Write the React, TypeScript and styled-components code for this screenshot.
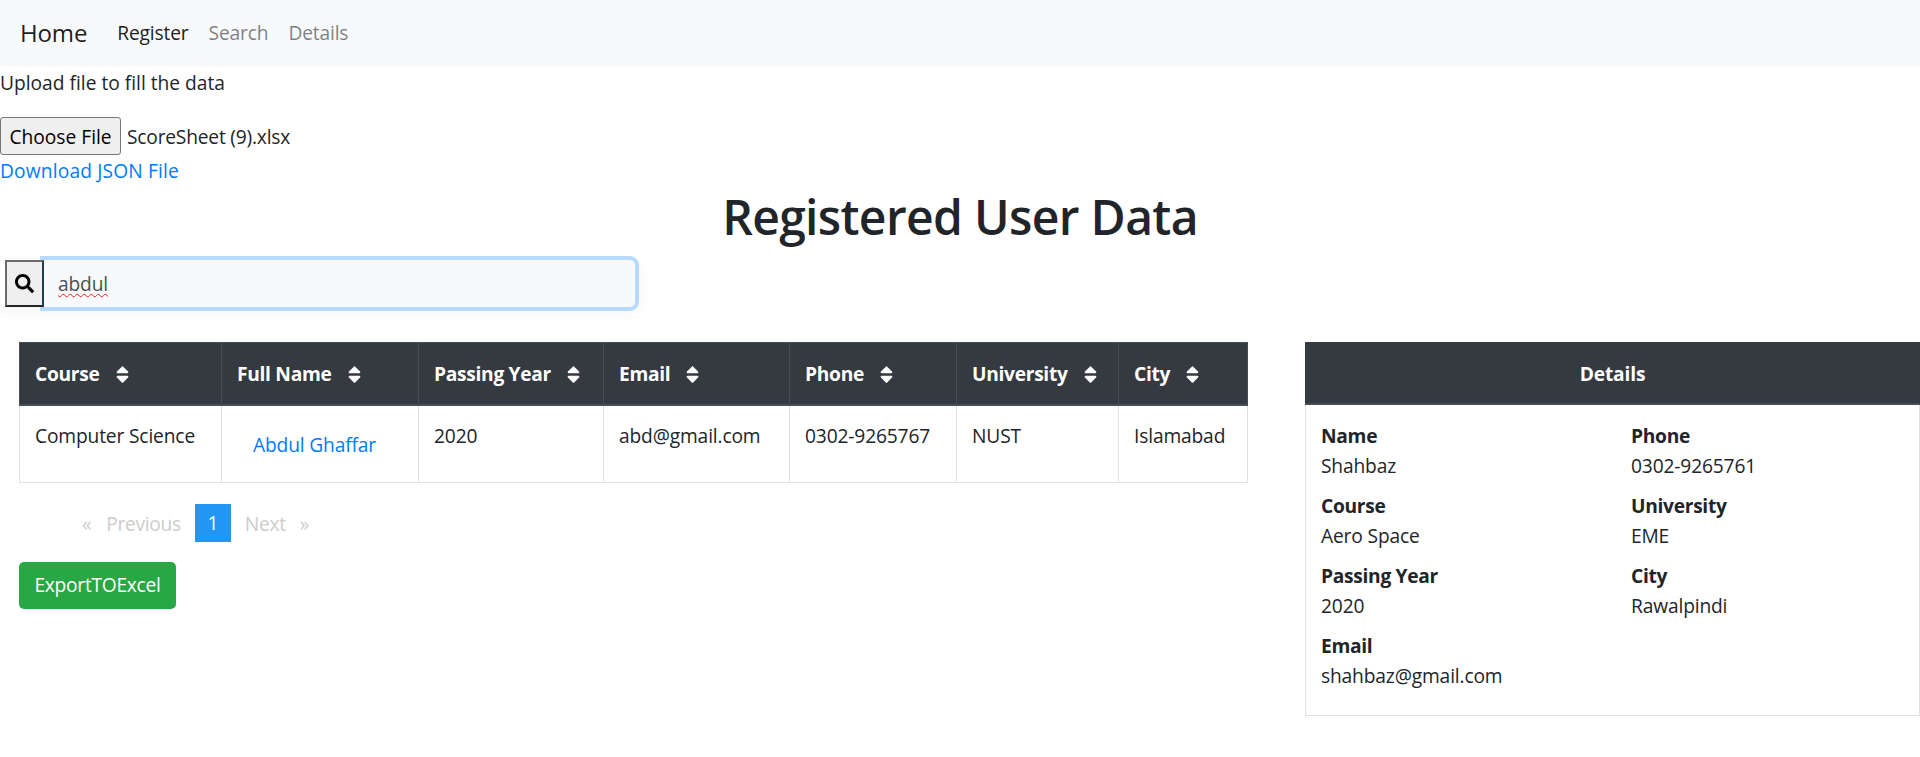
import React from "react";
import styled, { createGlobalStyle } from "styled-components";
import { FaSearch, FaSort } from "react-icons/fa";

const FONT = `"Open Sans", "Noto Sans", "Liberation Sans", sans-serif`;

const Global = createGlobalStyle`
  html, body { margin: 0; padding: 0; background: #fff; }
  body {
    font-family: ${FONT};
    font-size: 19.2px;
    line-height: 28.8px;
    color: #212529;
    letter-spacing: -0.15px;
  }
  * { box-sizing: border-box; }
`;

const Navbar = styled.nav`
  height: 67px;
  background: #f8f9fa;
  display: flex;
  align-items: center;
  padding: 0 20px;
`;
const Brand = styled.a`
  font-size: 24px;
  color: rgba(0, 0, 0, 0.9);
  margin-right: 30px;
`;
const NavLink = styled.a<{ $active?: boolean }>`
  color: ${(p) => (p.$active ? "rgba(0,0,0,0.9)" : "rgba(0,0,0,0.5)")};
  margin-right: 20px;
`;
const UploadLabel = styled.div`
  height: 50px;
  padding-top: 2px;
  letter-spacing: 0;
`;
const FileRow = styled.div`
  display: flex;
  align-items: center;
  height: 38px;
`;
const FileButton = styled.button`
  width: 121px;
  height: 38px;
  padding: 2px 0 0;
  font: inherit;
  letter-spacing: 0;
  color: #000;
  background: #efefef;
  border: 1px solid #767676;
  border-radius: 3px;
  margin-right: 6px;
`;
const FileName = styled.span`
  padding-top: 2px;
  letter-spacing: -0.2px;
`;
const Link = styled.a`
  color: #007bff;
`;
const DownloadRow = styled.div`
  height: 31px;
  padding-top: 2px;
  letter-spacing: 0.15px;
`;
const Heading = styled.h1`
  margin: 0;
  height: 60px;
  padding-top: 1px;
  font-size: 48px;
  line-height: 60px;
  font-weight: 600;
  text-align: center;
  letter-spacing: -0.65px;
`;
const SearchBar = styled.div`
  display: flex;
  width: 639px;
  height: 47px;
  margin-top: 14px;
  padding-left: 5px;
  align-items: stretch;
  border-radius: 8px;
  box-shadow: 0 4px 12px 4px rgba(0, 0, 0, 0.03);
`;
const SearchIcon = styled.div`
  position: relative;
  z-index: 1;
  width: 39px;
  display: flex;
  align-items: center;
  justify-content: center;
  background: #efefef;
  border: 2px solid;
  border-color: #6b6b6b #1d3a5c #26262a #6b6b6b;
  color: #000;
  font-size: 19px;
`;
const SearchInput = styled.div`
  width: 591px;
  display: flex;
  align-items: center;
  padding: 2px 0 0 14px;
  background: #f8f9fa;
  border-radius: 0 5px 5px 0;
  box-shadow: 0 0 0 4px #b8daff;
  color: #495057;
`;
const Misspelled = styled.span`
  text-decoration: underline wavy #e8202a;
  text-decoration-thickness: 1px;
  text-underline-offset: 2px;
`;
const Content = styled.div`
  display: flex;
  align-items: flex-start;
  margin-top: 35px;
  padding-left: 19px;
`;
const Left = styled.div`
  width: 1228px;
  flex: none;
`;
const Table = styled.table`
  width: 100%;
  table-layout: fixed;
  border-collapse: collapse;
`;
const Th = styled.th<{ $w: number }>`
  width: ${(p) => p.$w}px;
  height: 62px;
  padding: 2px 15px 0;
  background: #343a40;
  color: #fff;
  font-weight: 700;
  letter-spacing: -0.3px;
  text-align: left;
  border: 1px solid #454d55;
  border-bottom-width: 2px;
  white-space: nowrap;
`;
const SortIcon = styled(FaSort)`
  margin-left: 12px;
  font-size: 21px;
  vertical-align: -4px;
`;
const Td = styled.td`
  height: 78px;
  padding: 16px 15px 0;
  vertical-align: top;
  border: 1px solid #dee2e6;
  white-space: nowrap;
`;
const NameLink = styled(Link)`
  display: block;
  padding: 9px 0 0 16px;
`;
const Pager = styled.ul`
  list-style: none;
  display: flex;
  align-items: center;
  margin: 21px 0 0;
  padding: 0 0 0 63px;
  color: #ccc;
  letter-spacing: -0.3px;
`;
const PageText = styled.li`
  height: 38px;
  line-height: 40px;
  margin-right: 14px;
`;
const Arrow = styled(PageText)`
  margin-right: 15px;
`;
const PageNo = styled.li`
  width: 36px;
  height: 38px;
  line-height: 38px;
  text-align: center;
  background: #2196f3;
  color: #fff;
  margin-right: 14px;
`;
const ExportButton = styled.button`
  display: block;
  margin-top: 20px;
  width: 157px;
  height: 47px;
  padding: 0;
  font: inherit;
  letter-spacing: -0.28px;
  color: #fff;
  background: #28a745;
  border: 0;
  border-radius: 5px;
`;
const DetailsPanel = styled.section`
  margin-left: 58px;
  flex: 1;
  height: 374px;
  border: 1px solid #dee2e6;
  border-top: 0;
`;
const DetailsHead = styled.div`
  height: 63px;
  margin: 0 -1px;
  padding-top: 4px;
  background: #343a40;
  border-bottom: 2px solid #454d55;
  color: #fff;
  font-weight: 700;
  display: flex;
  align-items: center;
  justify-content: center;
`;
const DetailsGrid = styled.div`
  display: grid;
  grid-template-columns: 310px 1fr;
  grid-auto-rows: 70px;
  padding: 17px 0 0 15px;
`;
const Field = styled.div`
  display: flex;
  flex-direction: column;
`;
const FieldLabel = styled.strong`
  font-weight: 700;
  letter-spacing: -0.3px;
`;
const FieldValue = styled.span`
  margin-top: 1px;
`;

const cols: [string, number][] = [
  ["Course", 202],
  ["Full Name", 197],
  ["Passing Year", 185],
  ["Email", 186],
  ["Phone", 167],
  ["University", 162],
  ["City", 129],
];

const details: [string, string][] = [
  ["Name", "Shahbaz"],
  ["Phone", "0302-9265761"],
  ["Course", "Aero Space"],
  ["University", "EME"],
  ["Passing Year", "2020"],
  ["City", "Rawalpindi"],
  ["Email", "shahbaz@gmail.com"],
];

export default function App() {
  return (
    <>
      <Global />
      <Navbar>
        <Brand>Home</Brand>
        <NavLink $active>Register</NavLink>
        <NavLink>Search</NavLink>
        <NavLink>Details</NavLink>
      </Navbar>
      <UploadLabel>Upload file to fill the data</UploadLabel>
      <FileRow>
        <FileButton>Choose File</FileButton>
        <FileName>ScoreSheet (9).xlsx</FileName>
      </FileRow>
      <DownloadRow>
        <Link>Download JSON File</Link>
      </DownloadRow>
      <Heading>Registered User Data</Heading>
      <SearchBar>
        <SearchIcon>
          <FaSearch />
        </SearchIcon>
        <SearchInput>
          <Misspelled>abdul</Misspelled>
        </SearchInput>
      </SearchBar>
      <Content>
        <Left>
          <Table>
            <thead>
              <tr>
                {cols.map(([name, w]) => (
                  <Th key={name} $w={w}>
                    {name}
                    <SortIcon />
                  </Th>
                ))}
              </tr>
            </thead>
            <tbody>
              <tr>
                <Td>Computer Science</Td>
                <Td>
                  <NameLink>Abdul Ghaffar</NameLink>
                </Td>
                <Td>2020</Td>
                <Td>abd@gmail.com</Td>
                <Td>0302-9265767</Td>
                <Td>NUST</Td>
                <Td>Islamabad</Td>
              </tr>
            </tbody>
          </Table>
          <Pager>
            <Arrow>«</Arrow>
            <PageText>Previous</PageText>
            <PageNo>1</PageNo>
            <PageText>Next</PageText>
            <Arrow>»</Arrow>
          </Pager>
          <ExportButton>ExportTOExcel</ExportButton>
        </Left>
        <DetailsPanel>
          <DetailsHead>Details</DetailsHead>
          <DetailsGrid>
            {details.map(([label, value]) => (
              <Field key={label}>
                <FieldLabel>{label}</FieldLabel>
                <FieldValue>{value}</FieldValue>
              </Field>
            ))}
          </DetailsGrid>
        </DetailsPanel>
      </Content>
    </>
  );
}
